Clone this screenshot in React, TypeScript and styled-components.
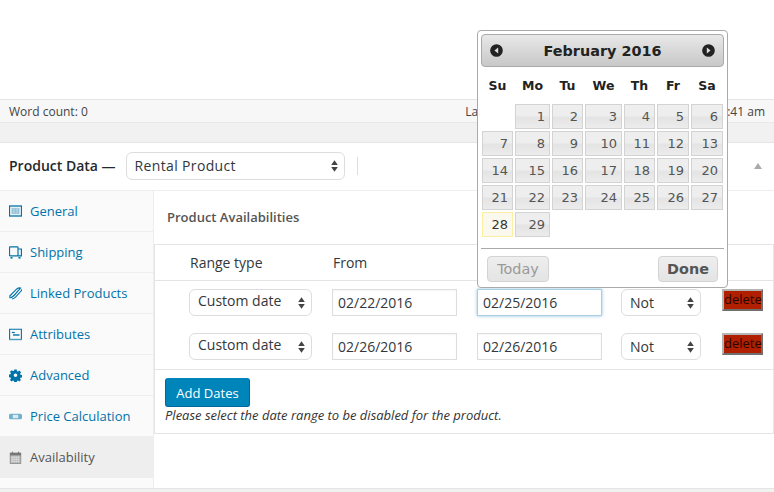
import React from "react";
import styled, { createGlobalStyle } from "styled-components";

const Global = createGlobalStyle`
  html, body { margin: 0; padding: 0; background: #fff; }
  body { width: 774px; height: 492px; overflow: hidden; font-family: "Open Sans", sans-serif; }
  * { box-sizing: border-box; }
`;

const Page = styled.div`
  position: relative;
  width: 774px;
  height: 492px;
  overflow: hidden;
  display: flex;
  flex-direction: column;
  padding-top: 99px;
`;

const StatusBar = styled.div`
  height: 24px;
  flex: none;
  display: flex;
  align-items: center;
  padding: 0 9px;
  background: #f7f7f7;
  border-top: 1px solid #e5e5e5;
  border-bottom: 1px solid #e8e8e8;
  font-size: 12px;
  color: #444;
`;

const StatusStart = styled.span`
  margin-left: auto;
  width: 262px;
`;

const Band = styled.div`
  height: 20px;
  flex: none;
  background: #f1f1f1;
  border-bottom: 1px solid #e5e5e5;
`;

const Panel = styled.div`
  flex: 1;
  display: flex;
  flex-direction: column;
  background: #fff;
`;

const PanelHeader = styled.div`
  height: 48px;
  flex: none;
  display: flex;
  align-items: center;
  padding: 0 9px 2px;
  border-bottom: 1px solid #eee;
  position: relative;
`;

const PanelTitle = styled.span`
  font-size: 14px;
  font-weight: 600;
  color: #23282d;
  margin-right: 10px;
`;

const Collapse = styled.span`
  position: absolute;
  right: 12px;
  top: 20px;
  width: 0;
  height: 0;
  border-left: 4px solid transparent;
  border-right: 4px solid transparent;
  border-bottom: 6px solid #aaa;
`;

const HeaderDivider = styled.span`
  width: 1px;
  height: 18px;
  background: #ddd;
  margin-left: 12px;
`;

const SelectBox = styled.div<{ $w: number; $h: number; $raise?: number; $spread?: boolean }>`
  position: relative;
  flex: none;
  width: ${(p) => p.$w}px;
  height: ${(p) => p.$h}px;
  border: 1px solid #ddd;
  border-radius: 6px;
  background: #fff;
  display: flex;
  align-items: center;
  padding: 0 8px ${(p) => p.$raise ?? 0}px;
  font-size: 14px;
  letter-spacing: ${(p) => (p.$spread ? "0.35px" : "0")};
  color: #32373c;
`;

const Updown = styled.svg`
  position: absolute;
  right: 6px;
  top: 50%;
  margin-top: -6px;
  width: 7px;
  height: 12px;
`;

const Body = styled.div`
  flex: 1;
  display: flex;
  min-height: 0;
`;

const Sidebar = styled.div`
  width: 154px;
  height: 297px;
  flex: none;
  background: #fafafa;
  border-right: 1px solid #eee;
  display: flex;
  flex-direction: column;
`;

const Tab = styled.div<{ $active?: boolean }>`
  height: 41px;
  flex: none;
  display: flex;
  align-items: center;
  gap: 8px;
  padding: 0 0 0 9px;
  border-bottom: 1px solid #eee;
  background: ${(p) => (p.$active ? "#eee" : "transparent")};
  color: ${(p) => (p.$active ? "#555" : "#0073aa")};
  font-size: 13px;
  white-space: nowrap;
`;

const TabIcon = styled.svg`
  width: 13px;
  height: 13px;
  flex: none;
  fill: none;
  stroke: currentColor;
  stroke-width: 1.1;
`;

const Main = styled.div`
  flex: 1;
  display: flex;
  flex-direction: column;
  min-width: 0;
`;

const Heading = styled.div`
  height: 53px;
  flex: none;
  padding: 18px 0 0 13px;
  font-size: 13px;
  font-weight: 600;
  color: #555;
  line-height: 17px;
`;

const RangeTable = styled.div`
  border-top: 1px solid #e5e5e5;
  border-left: 1px solid #e5e5e5;
  border-right: 1px solid #e5e5e5;
`;

const Row = styled.div`
  display: grid;
  grid-template-columns: 143px 145px 144px 101px 1fr;
  padding-left: 34px;
`;

const HeadRow = styled(Row)`
  height: 36px;
  align-items: center;
  border-bottom: 1px solid #e5e5e5;
  font-size: 14px;
  color: #32373c;
`;

const HeadCell = styled.span`
  padding-left: 1px;
`;

const DataRows = styled.div`
  height: 89px;
  padding-top: 8px;
  display: flex;
  flex-direction: column;
  gap: 17px;
  border-bottom: 1px solid #e5e5e5;
`;

const DataRow = styled(Row)`
  height: 27px;
  align-items: center;
`;

const DateField = styled.div<{ $focus?: boolean }>`
  width: 125px;
  height: 27px;
  border: 1px solid ${(p) => (p.$focus ? "#a9cfe2" : "#ddd")};
  box-shadow: ${(p) => (p.$focus ? "0 0 3px rgba(30,140,190,.5)" : "inset 0 1px 2px rgba(0,0,0,.04)")};
  padding: 0 5px;
  display: flex;
  align-items: center;
  font-size: 14px;
  color: #32373c;
  background: #fff;
`;

const DeleteButton = styled.div`
  width: 41px;
  height: 22px;
  margin-top: -5px;
  border: 2px solid;
  border-color: #b4b4b4 #6f6f6f #6f6f6f #b4b4b4;
  background: #b02000;
  color: #2a0500;
  font-size: 13px;
  line-height: 17px;
  text-align: center;
  white-space: nowrap;
`;

const Footer = styled.div`
  height: 64px;
  padding: 8px 0 0 10px;
  border-bottom: 1px solid #e5e5e5;
`;

const AddButton = styled.div`
  width: 85px;
  height: 29px;
  border-radius: 3px;
  background: #0085ba;
  border: 1px solid #006799;
  border-top-color: #0085ba;
  color: #fff;
  font-size: 13px;
  font-weight: 500;
  display: flex;
  align-items: center;
  justify-content: center;
`;

const Note = styled.div`
  font-size: 13px;
  font-style: italic;
  color: #333;
  line-height: 17px;
`;

const BottomBand = styled.div`
  position: absolute;
  left: 0;
  right: 0;
  bottom: 0;
  height: 4px;
  background: #f1f1f1;
  border-top: 1px solid #e5e5e5;
`;

const Calendar = styled.div`
  position: absolute;
  left: 477px;
  top: 30px;
  width: 251px;
  height: 258px;
  padding: 3px;
  background: #fff;
  border: 1px solid #aaa;
  border-radius: 4px;
  font-family: "DejaVu Sans", sans-serif;
  color: #222;
`;

const CalHeader = styled.div`
  height: 33px;
  border: 1px solid #aaa;
  border-radius: 4px;
  background: linear-gradient(#e8e8e8, #c8c8c8);
  display: flex;
  align-items: center;
  justify-content: space-between;
  padding: 0 8px;
`;

const MonthTitle = styled.div`
  font-size: 14.4px;
  font-weight: 700;
  color: #222;
`;

const NavIcon = styled.svg`
  width: 13px;
  height: 13px;
`;

const Weekdays = styled.div`
  display: grid;
  grid-template-columns: 31px 35px 31px 37px 31px 32px 32px;
  column-gap: 2px;
  height: 37px;
  align-items: center;
  margin-left: 1px;
`;

const Weekday = styled.div`
  font-size: 12.5px;
  font-weight: 700;
  text-align: center;
  color: #222;
`;

const DayGrid = styled.div`
  display: grid;
  grid-template-columns: 31px 35px 31px 37px 31px 32px 32px;
  grid-auto-rows: 25px;
  gap: 2px;
  margin-left: 1px;
`;

const Day = styled.div<{ $today?: boolean; $start?: number }>`
  ${(p) => (p.$start ? `grid-column-start: ${p.$start};` : "")}
  border: 1px solid ${(p) => (p.$today ? "#fcefa1" : "#d3d3d3")};
  background: ${(p) =>
    p.$today ? "#fbf9ee" : "linear-gradient(#eeeeee 0%, #eeeeee 45%, #e4e4e4 55%, #ececec 100%)"};
  color: ${(p) => (p.$today ? "#363636" : "#555")};
  font-size: 13px;
  text-align: right;
  padding-right: 4px;
  line-height: 24px;
`;

const CalFooter = styled.div`
  margin-top: 11px;
  border-top: 1px solid #aaa;
  padding: 7px 6px 0;
  display: flex;
  justify-content: space-between;
`;

const CalButton = styled.div<{ $primary?: boolean }>`
  height: 26px;
  width: ${(p) => (p.$primary ? 60 : 62)}px;
  border: 1px solid #d3d3d3;
  border-radius: 4px;
  background: linear-gradient(#eeeeee, #e4e4e4);
  color: ${(p) => (p.$primary ? "#555" : "#999")};
  font-size: 14.4px;
  font-weight: ${(p) => (p.$primary ? 700 : 400)};
  display: flex;
  align-items: center;
  justify-content: center;
`;

const Caret = () => (
  <Updown viewBox="0 0 7 12">
    <path d="M3.5 0.3 L6.8 5 L0.2 5 Z M3.5 11.7 L6.8 7 L0.2 7 Z" fill="#444" />
  </Updown>
);

const icons: Record<string, React.ReactNode> = {
  general: (
    <>
      <rect x="0.5" y="1" width="12" height="10" strokeWidth="1.3" />
      <rect x="2.5" y="2.8" width="8" height="6.4" fill="currentColor" stroke="none" opacity="0.4" />
      <path d="M5 2.8v6.4M8 2.8v6.4" stroke="#fff" strokeWidth="0.6" opacity="0.6" />
    </>
  ),
  shipping: (
    <>
      <rect x="0.5" y="0.8" width="8.5" height="9" rx="0.6" strokeWidth="1.2" />
      <path d="M9 3h3.4v6.8H9" strokeWidth="1.2" />
      <rect x="1.5" y="11" width="2" height="1.6" fill="currentColor" stroke="none" />
      <rect x="9.5" y="11" width="2" height="1.6" fill="currentColor" stroke="none" />
    </>
  ),
  linked: (
    <>
      <path d="M0.8 9 L7.5 2.2 Q9.5 0.6 11.5 1 L5 8.5 Q3 10.5 1 10.8 Z" />
      <path d="M3 12 Q5 11.8 6.5 10.2 L12.5 3.5 Q12.6 2.8 12 2.4" />
      <path d="M3.5 9.8 L9.5 3.2" strokeWidth="0.8" />
    </>
  ),
  attributes: (
    <>
      <path d="M0.6 11V1.2h11.8V11" strokeWidth="1.1" />
      <path d="M0 11.5h13" strokeWidth="1.4" opacity="0.7" />
      <path d="M2.8 4.5h3" strokeWidth="1.2" />
      <path d="M4 7h6.5" strokeWidth="1.4" />
    </>
  ),
  advanced: (
    <path
      fill="currentColor"
      stroke="none"
      fillRule="evenodd"
      d="M5.2 0.5h2.6l.3 1.8 1 .4 1.5-1 1.8 1.8-1 1.5.4 1 1.8.3v2.6l-1.8.3-.4 1-.1.1 1 1.5-1.7 1.5-1.5-1-1 .4-.3 1.8H5.2l-.3-1.8-1-.4-1.5 1-1.8-1.7 1-1.5-.4-1-1.8-.3V5.8l1.8-.3.4-1-1-1.5 1.8-1.8 1.5 1 1-.4zM6.5 4.7a1.9 1.9 0 1 0 0 3.8 1.9 1.9 0 0 0 0-3.8z"
      transform="translate(0.4 0) scale(0.94)"
    />
  ),
  price: (
    <>
      <rect x="0" y="3.8" width="13" height="5.4" rx="1.5" fill="currentColor" stroke="none" opacity="0.55" />
      <rect x="3.8" y="4.8" width="5.4" height="3.4" fill="#fff" stroke="none" opacity="0.75" />
    </>
  ),
  availability: (
    <>
      <rect x="1.2" y="2" width="10.6" height="10.5" fill="#bbb" stroke="#888" strokeWidth="0.8" />
      <rect x="1" y="2" width="11" height="2.4" fill="#777" stroke="none" />
      <path d="M3.5 0.8v2.2M9.5 0.8v2.2" stroke="#777" strokeWidth="1.2" />
      <path d="M2.4 6.2h8.2M2.4 8.2h8.2M2.4 10.2h8.2" stroke="#fff" strokeWidth="0.9" strokeDasharray="1.2 0.9" />
    </>
  ),
};

const tabs: [string, string][] = [
  ["general", "General"],
  ["shipping", "Shipping"],
  ["linked", "Linked Products"],
  ["attributes", "Attributes"],
  ["advanced", "Advanced"],
  ["price", "Price Calculation"],
  ["availability", "Availability"],
];

const days = Array.from({ length: 29 }, (_, i) => i + 1);

const rows = [
  { from: "02/22/2016", to: "02/25/2016", focus: true },
  { from: "02/26/2016", to: "02/26/2016", focus: false },
];

export default function App() {
  return (
    <Page>
      <Global />
      <StatusBar>
        <span>Word count: 0</span>
        <StatusStart>La</StatusStart>
        <span>:41 am</span>
      </StatusBar>
      <Band />
      <Panel>
        <PanelHeader>
          <PanelTitle>Product Data —</PanelTitle>
          <SelectBox $w={219} $h={28} $spread>
            <span>Rental Product</span>
            <Caret />
          </SelectBox>
          <HeaderDivider />
          <Collapse />
        </PanelHeader>
        <Body>
          <Sidebar>
            {tabs.map(([key, label]) => (
              <Tab key={key} $active={key === "availability"}>
                <TabIcon viewBox="0 0 13 13">{icons[key]}</TabIcon>
                <span>{label}</span>
              </Tab>
            ))}
          </Sidebar>
          <Main>
            <Heading>Product Availabilities</Heading>
            <RangeTable>
              <HeadRow>
                <HeadCell>Range type</HeadCell>
                <HeadCell>From</HeadCell>
              </HeadRow>
              <DataRows>
                {rows.map((r) => (
                  <DataRow key={r.from}>
                    <SelectBox $w={123} $h={27} $raise={4}>
                      <span>Custom date</span>
                      <Caret />
                    </SelectBox>
                    <DateField>{r.from}</DateField>
                    <DateField $focus={r.focus}>{r.to}</DateField>
                    <SelectBox $w={80} $h={27}>
                      <span>Not</span>
                      <Caret />
                    </SelectBox>
                    <DeleteButton>delete</DeleteButton>
                  </DataRow>
                ))}
              </DataRows>
              <Footer>
                <AddButton>Add Dates</AddButton>
                <Note>Please select the date range to be disabled for the product.</Note>
              </Footer>
            </RangeTable>
          </Main>
        </Body>
      </Panel>
      <BottomBand />
      <Calendar>
        <CalHeader>
          <NavIcon viewBox="0 0 14 14">
            <circle cx="7" cy="7" r="6.8" fill="#222" />
            <path d="M8.8 3.8 L4.8 7 L8.8 10.2 Z" fill="#ddd" />
          </NavIcon>
          <MonthTitle>February 2016</MonthTitle>
          <NavIcon viewBox="0 0 14 14">
            <circle cx="7" cy="7" r="6.8" fill="#222" />
            <path d="M5.2 3.8 L9.2 7 L5.2 10.2 Z" fill="#ddd" />
          </NavIcon>
        </CalHeader>
        <Weekdays>
          {["Su", "Mo", "Tu", "We", "Th", "Fr", "Sa"].map((d) => (
            <Weekday key={d}>{d}</Weekday>
          ))}
        </Weekdays>
        <DayGrid>
          {days.map((d) => (
            <Day key={d} $today={d === 28} $start={d === 1 ? 2 : undefined}>
              {d}
            </Day>
          ))}
        </DayGrid>
        <CalFooter>
          <CalButton>Today</CalButton>
          <CalButton $primary>Done</CalButton>
        </CalFooter>
      </Calendar>
    </Page>
  );
}
